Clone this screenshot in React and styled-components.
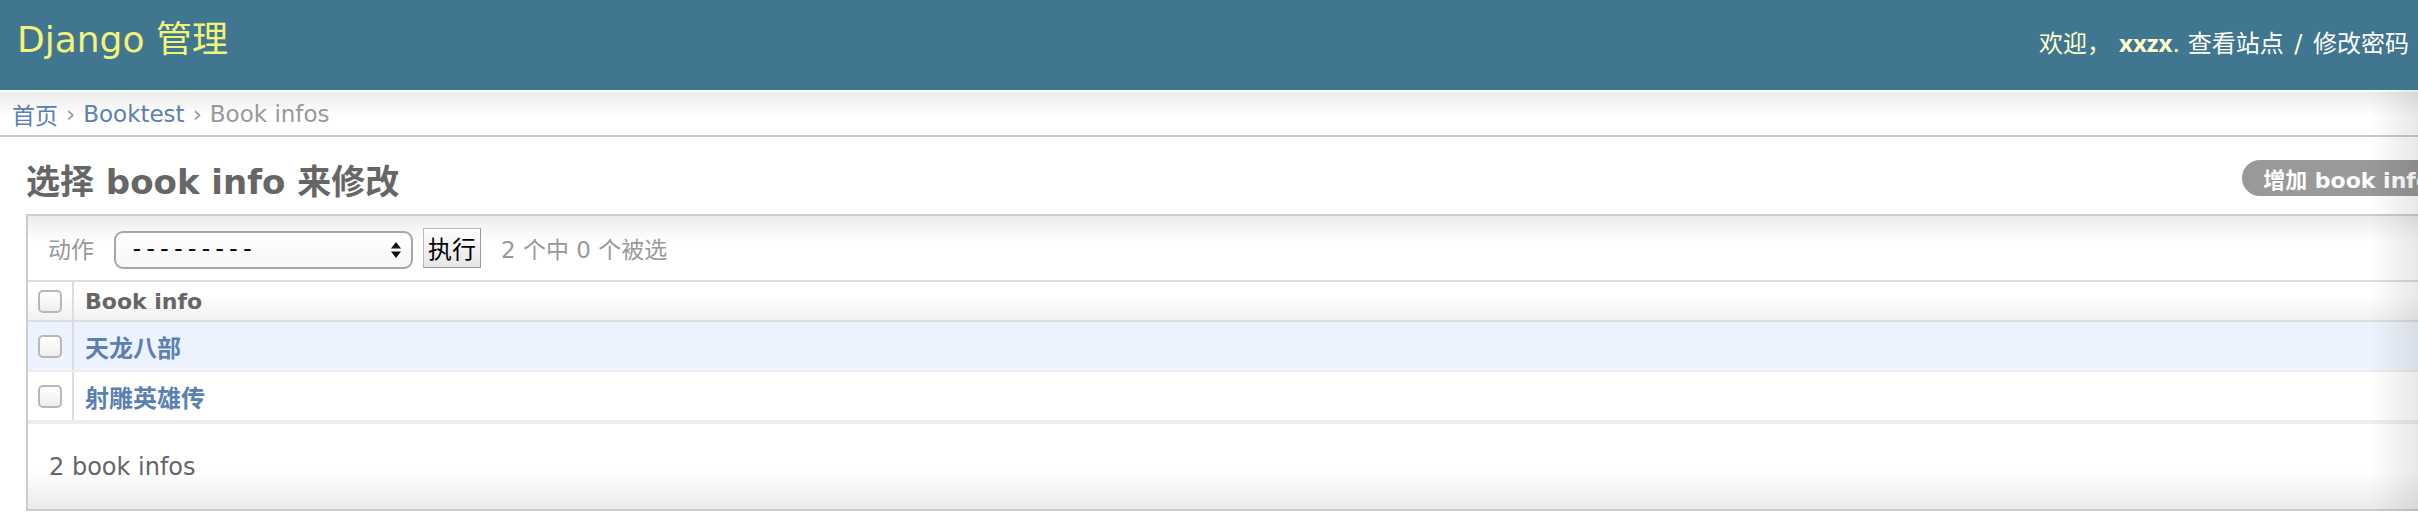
import React from "react";
import styled, { createGlobalStyle } from "styled-components";

const Global = createGlobalStyle`
  html, body { margin: 0; padding: 0; background: #fff; overflow: hidden; }
  body { font-family: "DejaVu Sans", "Noto Sans CJK SC", sans-serif; color: #333; }
  a { text-decoration: none; }
`;

const Page = styled.div`
  width: 100vw;
  overflow: hidden;
  position: relative;
`;

const Header = styled.header`
  height: 90px;
  background: #417690;
  display: flex;
  justify-content: space-between;
  align-items: flex-start;
`;

const Branding = styled.h1`
  margin: 0;
  padding: 18px 0 0 17px;
  font-size: 36px;
  line-height: 44px;
  font-weight: normal;
  color: #f4f379;
  white-space: nowrap;
`;

const UserTools = styled.div`
  padding: 28px 9px 0 0;
  font-size: 24px;
  line-height: 30px;
  color: #ffc;
  white-space: pre;
  strong {
    font-family: "Open Sans", "Noto Sans CJK SC", sans-serif;
    font-weight: bold;
    margin-left: 8px;
  }
  a { color: #fff; }
`;

const Slash = styled.span`
  color: #ffc;
  margin: 0 3px;
`;

const Breadcrumbs = styled.nav`
  height: 43px;
  border-top: 2px solid #fff;
  border-bottom: 2px solid #ccc;
  background: linear-gradient(to bottom, #ebebeb 0px, #fff 24px, #fff 100%);
  padding: 0 12px;
  display: flex;
  align-items: center;
  font-size: 23px;
  color: #999;
  white-space: nowrap;
  a { color: #5b80b2; }
`;

const Sep = styled.span`
  margin: 0 8px;
  color: #999;
`;

const Content = styled.main`
  width: 2472px;
  box-sizing: border-box;
  padding: 23px 20px 0 26px;
`;

const TitleRow = styled.div`
  display: flex;
  justify-content: space-between;
  align-items: flex-start;
  height: 54px;
`;

const Title = styled.h1`
  margin: 0;
  font-size: 34px;
  line-height: 44px;
  font-weight: bold;
  color: #666;
  white-space: nowrap;
`;

const AddButton = styled.a`
  display: inline-flex;
  align-items: center;
  height: 36px;
  padding: 0 21px;
  border-radius: 18px;
  background: #999;
  color: #fff;
  font-size: 22px;
  font-weight: bold;
  white-space: nowrap;
`;

const Module = styled.section`
  border: 2px solid #ccc;
`;

const Actions = styled.div`
  height: 64px;
  border-bottom: 2px solid #ddd;
  background: linear-gradient(to bottom, #ececec 0px, #fff 26px, #fff 100%);
  display: flex;
  align-items: center;
  padding-left: 20px;
  font-size: 23px;
  color: #999;
  white-space: nowrap;
`;

const ActionLabel = styled.span`
  margin-right: 20px;
`;

const SelectWrap = styled.div`
  position: relative;
  width: 299px;
  height: 38px;
  margin-top: 4px;
`;

const Select = styled.select`
  appearance: none;
  width: 100%;
  height: 100%;
  box-sizing: border-box;
  border: 2px solid #a6a6a6;
  border-radius: 9px;
  background: linear-gradient(to bottom, #fff, #f6f6f6);
  padding: 0 0 0 14px;
  font-family: "Liberation Mono", monospace;
  font-size: 23px;
  color: #000;
`;

const Arrows = styled.svg`
  position: absolute;
  right: 11px;
  top: 10px;
  pointer-events: none;
`;

const GoButton = styled.button`
  margin-left: 10px;
  width: 58px;
  height: 40px;
  box-sizing: border-box;
  border: 1px solid #bbb;
  border-right-color: #999;
  border-bottom-color: #999;
  background: linear-gradient(to bottom, #fdfdfd, #e6e6e6);
  font-family: "Noto Sans CJK SC", sans-serif;
  font-size: 24px;
  line-height: 1;
  color: #000;
  padding: 0;
`;

const Counter = styled.span`
  margin-left: 20px;
  color: #999;
`;

const Row = styled.div`
  display: grid;
  grid-template-columns: 44px 1fr;
  height: ${(p) => p.$h}px;
  border-bottom: 2px solid ${(p) => (p.$head ? "#ddd" : "#eee")};
  background: ${(p) =>
    p.$head
      ? "linear-gradient(to bottom, #fff 0%, #fff 35%, #f1f1f1 100%)"
      : p.$alt
      ? "#edf3fe"
      : "#fff"};
`;

const CheckCell = styled.div`
  display: flex;
  align-items: center;
  padding-left: 10px;
`;

const NameCell = styled.div`
  border-left: 2px solid #ddd;
  display: flex;
  align-items: center;
  padding-left: 11px;
  font-weight: bold;
  font-size: ${(p) => (p.$head ? 22 : 24)}px;
  color: ${(p) => (p.$head ? "#666" : "#5b80b2")};
  white-space: nowrap;
  a { color: #5b80b2; }
`;

const Check = styled.input`
  appearance: none;
  margin: 0;
  width: 24px;
  height: 23px;
  border: 2px solid #b8b8b8;
  border-radius: 5px;
  background: linear-gradient(to bottom, #fff, #eee);
  box-sizing: border-box;
`;

const Paginator = styled.div`
  border-top: 2px solid #eee;
  height: 85px;
  display: flex;
  align-items: center;
  padding-left: 21px;
  font-size: 24px;
  color: #666;
  background: linear-gradient(to bottom, #fff 0%, #fff 55%, #ebebeb 100%);
  white-space: nowrap;
`;

const Vignette = styled.div`
  position: absolute;
  top: 90px;
  right: 0;
  bottom: 0;
  width: 48px;
  pointer-events: none;
  background: linear-gradient(to right, rgba(0, 0, 0, 0), rgba(0, 0, 0, 0.09));
`;

const books = ["天龙八部", "射雕英雄传"];

export default function App() {
  return (
    <Page>
      <Global />
      <Header>
        <Branding>Django 管理</Branding>
        <UserTools>
          欢迎，<strong>xxzx</strong>{". "}
          <a href="#">查看站点</a>
          <Slash>{" / "}</Slash>
          <a href="#">修改密码</a>
        </UserTools>
      </Header>
      <Breadcrumbs>
        <a href="#">首页</a>
        <Sep>›</Sep>
        <a href="#">Booktest</a>
        <Sep>›</Sep>
        Book infos
      </Breadcrumbs>
      <Content>
        <TitleRow>
          <Title>选择 book info 来修改</Title>
          <AddButton href="#">增加 book info</AddButton>
        </TitleRow>
        <Module>
          <Actions>
            <ActionLabel>动作</ActionLabel>
            <SelectWrap>
              <Select defaultValue="">
                <option value="">---------</option>
              </Select>
              <Arrows width="12" height="18" viewBox="0 0 12 18">
                <path d="M6 1 L11 7.5 L1 7.5 Z" fill="#111" />
                <path d="M6 17 L11 10.5 L1 10.5 Z" fill="#111" />
              </Arrows>
            </SelectWrap>
            <GoButton>执行</GoButton>
            <Counter>2 个中 0 个被选</Counter>
          </Actions>
          <Row $head $h={38}>
            <CheckCell>
              <Check type="checkbox" />
            </CheckCell>
            <NameCell $head>Book info</NameCell>
          </Row>
          {books.map((b, i) => (
            <Row key={b} $alt={i === 0} $h={48}>
              <CheckCell>
                <Check type="checkbox" />
              </CheckCell>
              <NameCell>
                <a href="#">{b}</a>
              </NameCell>
            </Row>
          ))}
          <Paginator>2 book infos</Paginator>
        </Module>
      </Content>
      <Vignette />
    </Page>
  );
}
